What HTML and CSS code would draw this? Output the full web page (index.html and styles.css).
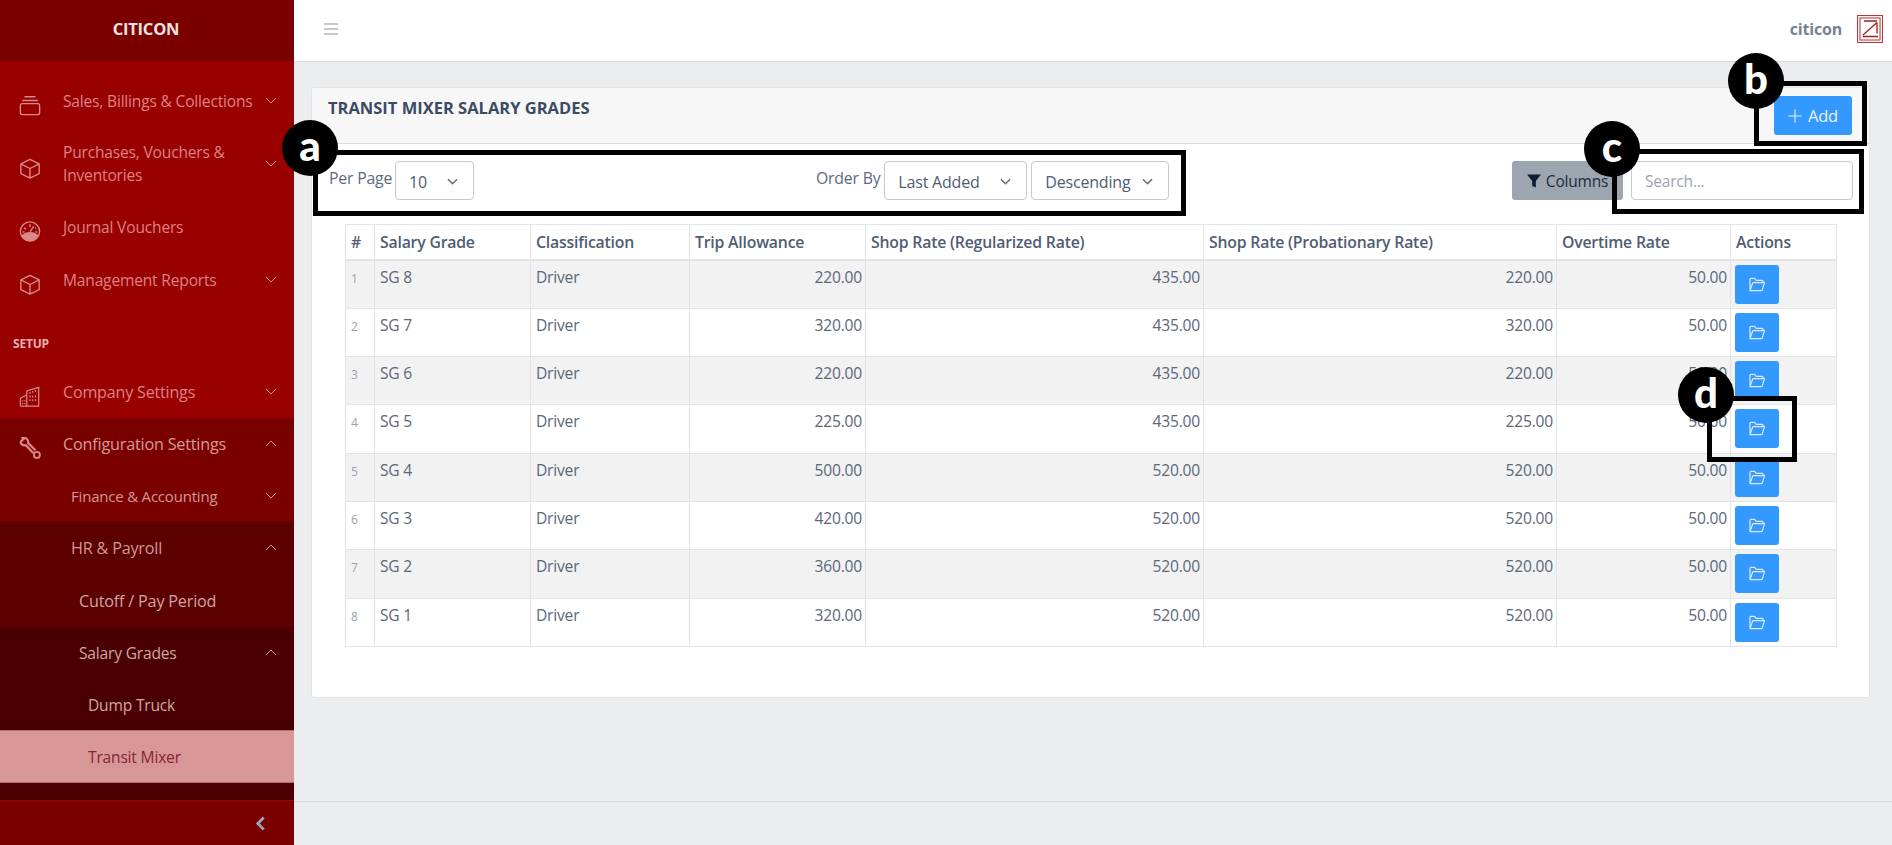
FILE: index.html
```html
<!DOCTYPE html>
<html lang="en">
<head>
<meta charset="utf-8">
<title>Transit Mixer Salary Grades</title>
<link rel="stylesheet" href="styles.css">
</head>
<body>
<svg class="defs" width="0" height="0" aria-hidden="true">
  <symbol id="chev-d" viewBox="0 0 12 7"><path d="M1 1l5 5 5-5" fill="none" stroke="currentColor" stroke-width="1"/></symbol>
  <symbol id="chev-u" viewBox="0 0 12 7"><path d="M1 6l5-5 5 5" fill="none" stroke="currentColor" stroke-width="1"/></symbol>
  <symbol id="chev-s" viewBox="0 0 12 7"><path d="M1 1l5 5 5-5" fill="none" stroke="currentColor" stroke-width="1.500"/></symbol>
  <symbol id="cube" viewBox="0 0 24 24"><path d="M12 2l10 5v10.500l-10 5-10-5V7zM2 7l10 5 10-5M12 12v10.500" fill="none" stroke="currentColor" stroke-width="1.500" stroke-linejoin="round"/></symbol>
  <symbol id="folder" viewBox="0 0 18 16"><path d="M1 14V2.500C1 2 1.400 1.500 2 1.500h4l1.500 2H14c.6 0 1 .4 1 1V6M1 14.500L4 6h12.500L14 14c-.1.3-.4.5-.8.5z" fill="none" stroke="currentColor" stroke-width="1.300" stroke-linejoin="round"/></symbol>
</svg>
<div class="app">
  <aside class="sidebar">
    <div class="brand">CITICON</div>
    <nav class="nav">
      <a class="item top first"><svg class="ico" viewBox="0 0 24 24"><path d="M6 2.500h12M3.500 6.500h17" fill="none" stroke="currentColor" stroke-width="1.500"/><rect x="1.500" y="10" width="21" height="12" rx="2" fill="none" stroke="currentColor" stroke-width="1.500"/></svg><span class="label">Sales, Billings &amp; Collections</span><svg class="chev"><use href="#chev-d"/></svg></a>
      <a class="item top tall"><svg class="ico"><use href="#cube"/></svg><span class="label">Purchases, Vouchers &amp; Inventories</span><svg class="chev"><use href="#chev-d"/></svg></a>
      <a class="item top"><svg class="ico" viewBox="0 0 24 24"><circle cx="12" cy="12" r="10.500" fill="none" stroke="currentColor" stroke-width="1.500"/><path d="M2.500 17c2-3 5.500-4.500 9.500-4.500s7.500 1.500 9.500 4.500c-2 3.500-5.500 5.500-9.500 5.500S4.500 20.500 2.500 17z" fill="currentColor"/><path d="M12 12.500l4-6M12 4v3M5.500 8l2 1.500M18.500 8l-1 .8M4 12.500h2M18 12.500h2" stroke="currentColor" stroke-width="1.500"/></svg><span class="label">Journal Vouchers</span></a>
      <a class="item top"><svg class="ico"><use href="#cube"/></svg><span class="label">Management Reports</span><svg class="chev"><use href="#chev-d"/></svg></a>
      <div class="section">SETUP</div>
      <a class="item top co"><svg class="ico" viewBox="0 0 24 24"><path d="M1.500 22.500V14l7-4v12.500M8.500 22.500V6l13-4v20.500zM1.500 22.500h20M12 7v2M15 6v2M18 5v2M12 11v2M15 11v2M18 11v2M12 15v2M15 15v2M18 15v2M4 16v1.500M6.500 16v1.500M4 19v1.500M6.500 19v1.500" fill="none" stroke="currentColor" stroke-width="1.300"/></svg><span class="label">Company Settings</span><svg class="chev"><use href="#chev-d"/></svg></a>
      <div class="group g1">
        <a class="item top open"><svg class="ico" viewBox="0 0 24 24"><path d="M1.500 5L5 1.500l-1-1C7-.5 10.500 2 10 6l8 8" fill="none" stroke="currentColor" stroke-width="2.400"/><path d="M1.500 5C2.500 7.500 5 9 7.500 8.500l8 8.500" fill="none" stroke="currentColor" stroke-width="2.400"/><circle cx="19.500" cy="19" r="3.300" fill="none" stroke="currentColor" stroke-width="2"/></svg><span class="label">Configuration Settings</span><svg class="chev"><use href="#chev-u"/></svg></a>
        <a class="item l2 fin"><span class="label">Finance &amp; Accounting</span><svg class="chev"><use href="#chev-d"/></svg></a>
        <div class="group g2">
          <a class="item l2 hr"><span class="label">HR &amp; Payroll</span><svg class="chev"><use href="#chev-u"/></svg></a>
          <a class="item l3 cutoff"><span class="label">Cutoff / Pay Period</span></a>
          <div class="group g3">
            <a class="item l3"><span class="label">Salary Grades</span><svg class="chev"><use href="#chev-u"/></svg></a>
            <a class="item l4 dump"><span class="label">Dump Truck</span></a>
            <a class="item l4 active"><span class="label">Transit Mixer</span></a>
          </div>
        </div>
      </div>
    </nav>
    <div class="collapse"><svg viewBox="0 0 10 14"><path d="M8 1.500L2.500 7 8 12.500" fill="none" stroke="currentColor" stroke-width="2.600"/></svg></div>
  </aside>
  <div class="main">
    <header class="topbar">
      <svg class="burger" viewBox="0 0 16 12"><path d="M1 1h14M1 6h14M1 11h14" stroke="currentColor" stroke-width="1"/></svg>
      <div class="user">
        <span class="username">citicon</span>
        <svg class="logo" viewBox="0 0 26 28"><rect x=".5" y=".5" width="25" height="27" fill="#fbeeee" stroke="#b33a3a"/><rect x="3" y="3" width="20" height="22" fill="#fff" stroke="#b33a3a"/><path d="M6 21.500h15M6 20L20 7.500M20 7.500v11M7 6h13" fill="none" stroke="#a51d1d" stroke-width="1.300"/></svg>
      </div>
    </header>
    <div class="content">
      <section class="card">
        <div class="card-head">
          <h1>TRANSIT MIXER SALARY GRADES</h1>
          <button class="btn add"><svg viewBox="0 0 14 14"><path d="M7 .5v13M.5 7h13" stroke="currentColor" stroke-width="1.100"/></svg>Add</button>
        </div>
        <div class="card-body">
          <div class="toolbar">
            <div class="tool-left">
              <label>Per Page</label>
              <div class="select s-page">10<svg class="sel-chev"><use href="#chev-s"/></svg></div>
            </div>
            <div class="tool-mid">
              <label>Order By</label>
              <div class="select s-order">Last Added<svg class="sel-chev"><use href="#chev-s"/></svg></div>
              <div class="select s-dir">Descending<svg class="sel-chev"><use href="#chev-s"/></svg></div>
            </div>
            <div class="tool-right">
              <button class="btn columns"><svg viewBox="0 0 14 14"><path d="M0 .5h14L8.800 7v6.500L5.200 12V7z" fill="currentColor"/></svg>Columns</button>
              <input class="search" type="text" placeholder="Search...">
            </div>
          </div>
          <table class="grid">
            <colgroup><col class="c1"><col class="c2"><col class="c3"><col class="c4"><col class="c5"><col class="c6"><col class="c7"><col class="c8"></colgroup>
            <thead>
              <tr><th>#</th><th>Salary Grade</th><th>Classification</th><th>Trip Allowance</th><th>Shop Rate (Regularized Rate)</th><th>Shop Rate (Probationary Rate)</th><th>Overtime Rate</th><th>Actions</th></tr>
            </thead>
            <tbody>
              <tr><td class="idx">1</td><td>SG 8</td><td>Driver</td><td class="num">220.00</td><td class="num">435.00</td><td class="num">220.00</td><td class="num">50.00</td><td class="act"><button class="btn open-btn"><svg><use href="#folder"/></svg></button></td></tr>
              <tr><td class="idx">2</td><td>SG 7</td><td>Driver</td><td class="num">320.00</td><td class="num">435.00</td><td class="num">320.00</td><td class="num">50.00</td><td class="act"><button class="btn open-btn"><svg><use href="#folder"/></svg></button></td></tr>
              <tr><td class="idx">3</td><td>SG 6</td><td>Driver</td><td class="num">220.00</td><td class="num">435.00</td><td class="num">220.00</td><td class="num">50.00</td><td class="act"><button class="btn open-btn"><svg><use href="#folder"/></svg></button></td></tr>
              <tr><td class="idx">4</td><td>SG 5</td><td>Driver</td><td class="num">225.00</td><td class="num">435.00</td><td class="num">225.00</td><td class="num">50.00</td><td class="act"><button class="btn open-btn"><svg><use href="#folder"/></svg></button></td></tr>
              <tr><td class="idx">5</td><td>SG 4</td><td>Driver</td><td class="num">500.00</td><td class="num">520.00</td><td class="num">520.00</td><td class="num">50.00</td><td class="act"><button class="btn open-btn"><svg><use href="#folder"/></svg></button></td></tr>
              <tr><td class="idx">6</td><td>SG 3</td><td>Driver</td><td class="num">420.00</td><td class="num">520.00</td><td class="num">520.00</td><td class="num">50.00</td><td class="act"><button class="btn open-btn"><svg><use href="#folder"/></svg></button></td></tr>
              <tr><td class="idx">7</td><td>SG 2</td><td>Driver</td><td class="num">360.00</td><td class="num">520.00</td><td class="num">520.00</td><td class="num">50.00</td><td class="act"><button class="btn open-btn"><svg><use href="#folder"/></svg></button></td></tr>
              <tr><td class="idx">8</td><td>SG 1</td><td>Driver</td><td class="num">320.00</td><td class="num">520.00</td><td class="num">520.00</td><td class="num">50.00</td><td class="act"><button class="btn open-btn"><svg><use href="#folder"/></svg></button></td></tr>
            </tbody>
          </table>
        </div>
      </section>
    </div>
    <footer class="foot"></footer>
  </div>
</div>
<div class="mark box-a"></div><div class="mark box-b"></div><div class="mark box-c"></div><div class="mark box-d"></div>
<div class="pin pin-a">a</div><div class="pin pin-b">b</div><div class="pin pin-c">c</div><div class="pin pin-d">d</div>
</body>
</html>
```
FILE: styles.css
```css
* { box-sizing: border-box; }
html, body { margin: 0; height: 845px; overflow: hidden; }
body { font-family: "Open Sans", "Noto Sans", sans-serif; font-size: 14px; color: #4f5d73; background: #ebedef; position: relative; letter-spacing: -0.2px; }
.defs { position: absolute; }
.app { display: flex; height: 845px; }

.sidebar { width: 294px; flex: none; display: flex; flex-direction: column; background: #990000; color: rgba(255,255,255,.5); }
.brand { height: 61px; flex: none; background: #7a0000; color: #efe3e3; font-weight: 700; font-size: 16.500px; display: flex; align-items: center; justify-content: center; padding: 0 2px 4px 0; }
.nav { flex: 1; min-height: 0; overflow: hidden; }
.item { display: flex; align-items: center; height: 53px; padding: 0 17px 0 19px; position: relative; font-size: 15.600px; line-height: 23px; }
.item.first { margin-top: 14px; height: 52px; }
.item.tall { height: 74px; }
.item.co { height: 52px; font-size: 16.100px; }
.item.open { font-size: 16.200px; }
.item.fin { font-size: 15px; }
.item.hr, .item.cutoff { font-size: 16.200px; }
.item .label { flex: 1; }
.ico { width: 22px; height: 23px; margin: 8px 22px 0 0; flex: none; color: #d88a8a; }
.top .label { color: #dc8383; }
.chev { width: 12px; height: 7px; flex: none; margin-bottom: 2px; color: #d98f8f; }
.section { height: 59px; padding: 27px 0 0 13px; font-size: 12px; font-weight: 700; line-height: 20px; color: #e3b0b0; }
.g1 { background: #7a0000; }
.g1 .top .label { color: #d69a9a; }
.g2 { background: #5c0000; }
.g3 { background: #4a0000; padding-bottom: 17px; }
.l2 { padding-left: 71px; height: 54px; color: #cf9898; }
.fin { height: 50px; }
.l3 { padding-left: 79px; height: 52px; color: #cfa5a5; }
.l4 { padding-left: 88px; height: 53px; color: #cfa5a5; }
.l4 .label { padding-top: 2px; }
.dump { height: 51px; }
.active { background: #d89797; color: #8a2432; border-top: 1px solid #b96a6f; border-bottom: 1px solid #b96a6f; }
.collapse { height: 44px; flex: none; background: #7a0000; display: flex; align-items: center; justify-content: flex-end; padding-right: 28px; color: #9aa6bc; }
.collapse svg { width: 11px; height: 15px; }

.main { flex: 1; min-width: 0; display: flex; flex-direction: column; }
.topbar { height: 62px; flex: none; background: #fff; border-bottom: 1px solid #d8dbe0; display: flex; align-items: center; justify-content: space-between; padding: 0 9px 4px 29px; }
.burger { width: 16px; height: 12px; color: #8a93a2; }
.user { display: flex; align-items: center; gap: 15px; }
.username { font-weight: 700; color: #768192; font-size: 16px; }
.logo { width: 26px; height: 28px; display: block; }

.content { flex: 1; min-height: 0; padding: 25px 22px 0 17px; }
.card { background: #fff; border: 1px solid #e3e5e9; border-radius: 3px; height: 611px; }
.card-head { height: 56px; background: #f7f7f7; border-bottom: 1px solid #d8dbe0; display: flex; justify-content: space-between; align-items: flex-start; padding: 8px 17px 0 16px; }
h1 { margin: 1px 0 0; font-size: 16.500px; letter-spacing: 0; font-weight: 700; color: #3c4b64; line-height: 22px; }
.btn { border: 0; border-radius: 3px; font: inherit; letter-spacing: inherit; display: inline-flex; align-items: center; justify-content: center; padding: 0; }
.add { width: 78px; height: 39px; background: #39f; color: #ebf4ff; font-size: 16.500px; gap: 6px; }
.add svg { width: 14px; height: 14px; }
.card-body { padding: 17px 33px 0 17px; }
.toolbar { display: flex; height: 39px; align-items: flex-start; }
.toolbar label { font-size: 15.800px; line-height: 20px; margin-top: 7px; color: #5d6a80; }
.tool-left { display: flex; gap: 3px; width: 487px; }
.tool-mid { display: flex; gap: 4px; }
.tool-right { margin-left: auto; display: flex; gap: 8px; margin-right: -17px; }
.select { height: 39px; border: 1px solid #c4c9d0; border-radius: 4px; display: flex; align-items: center; justify-content: space-between; font-size: 16px; color: #4f5d73; background: #fff; padding: 2px 15px 0 13px; }
.s-page { width: 79px; }
.s-order { width: 143px; }
.s-dir { width: 138px; }
.sel-chev { width: 11px; height: 7px; color: #5d6a80; }
.columns { width: 111px; height: 39px; background: #9da5b1; color: #1c2a3e; font-size: 15.500px; gap: 5px; }
.columns svg { width: 14px; height: 14px; color: #0f1c33; }
.search { width: 222px; height: 39px; border: 1px solid #c4c9d0; border-radius: 4px; font: inherit; letter-spacing: inherit; font-size: 15.500px; padding: 0 13px; outline: 0; }
.search::placeholder { color: #9aa3b1; }

.grid { width: 1491px; margin: 24px 0 0 16px; border-collapse: collapse; table-layout: fixed; border: 1px solid #e3e4e8; }
.c1 { width: 29px; } .c2 { width: 156px; } .c3 { width: 159px; } .c4 { width: 176px; }
.c5 { width: 338px; } .c6 { width: 353px; } .c7 { width: 174px; } .c8 { width: 106px; }
.grid th, .grid td { border: 1px solid #e3e4e8; padding: 0 3px 0 5px; vertical-align: top; }
.grid th { height: 35px; text-align: left; font-weight: 600; font-size: 15.800px; line-height: 34px; color: #4f5d73; border-bottom-width: 2px; }
.grid td { height: 48.300px; font-size: 15.600px; line-height: 20px; padding-top: 6px; color: #5b677b; }
.grid tbody tr:nth-child(odd) { background: #f2f2f3; }
.grid td.idx { color: #9aa2b0; font-size: 12px; padding-top: 8px; }
.num { text-align: right; }
.grid td.act { padding: 4px 0 0 4px; }
.open-btn { width: 44px; height: 39px; background: #39f; color: #dbeaff; display: flex; }
.open-btn svg { width: 17px; height: 15px; }

.foot { height: 44px; flex: none; border-top: 1px solid #d8dbe0; background: #ebedef; }

.mark { position: absolute; border: 5px solid #000; }
.box-a { left: 313px; top: 150px; width: 873px; height: 66px; }
.box-b { left: 1754px; top: 81px; width: 113px; height: 65px; }
.box-c { left: 1612px; top: 149px; width: 252px; height: 65px; }
.box-d { left: 1707px; top: 396px; width: 90px; height: 66px; }
.pin { position: absolute; width: 56px; height: 56px; border-radius: 50%; background: #000; color: #fff; font-family: Lato, sans-serif; font-weight: 900; font-size: 42px; line-height: 50px; text-align: center; letter-spacing: 0; }
.pin-a { left: 282px; top: 120px; }
.pin-b { left: 1728px; top: 53px; }
.pin-c { left: 1584px; top: 121px; }
.pin-d { left: 1678px; top: 367px; }
```
